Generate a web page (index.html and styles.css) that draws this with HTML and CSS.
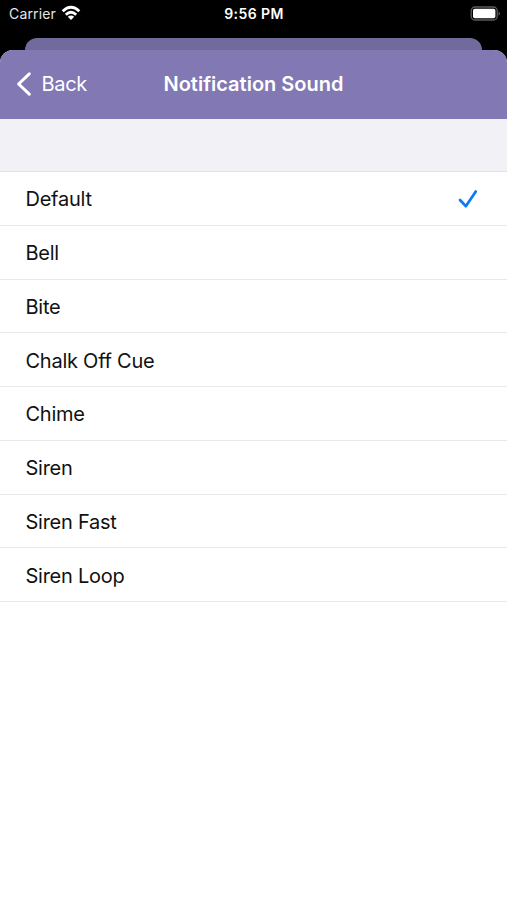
FILE: index.html
```
<!DOCTYPE html>
<html lang="en">
<head>
<meta charset="utf-8">
<title>Notification Sound</title>
<link rel="stylesheet" href="styles.css">
</head>
<body>
<header class="status">
  <div class="carrier"><span class="carrier-name">Carrier</span>
    <svg class="wifi" width="20" height="16" viewBox="0 0 20 16" fill="none" stroke="#fff" stroke-width="2.9"><path d="M1.7 6.2Q10 -1.5 18.3 6.2M4.8 9.7Q10 4.9 15.2 9.7"/><path d="M6.8 11.8Q10 9 13.2 11.8L10 15Z" fill="#fff" stroke="none"/></svg>
  </div>
  <time class="time">9:56 PM</time>
  <svg class="battery" width="31" height="16" viewBox="0 0 31 16"><rect x="1.2" y="1" width="26" height="13" rx="3.8" fill="none" stroke="#5c5c5c" stroke-width="1.3"/><rect x="3" y="2.8" width="22.4" height="9.4" rx="1.8" fill="#fff"/><path d="M28.6 5.2Q31.2 7.5 28.6 9.8Z" fill="#666"/></svg>
</header>
<div class="sheet-behind"></div>
<main class="sheet">
  <nav class="navbar">
    <a class="back"><svg class="chevron" width="16" height="26" viewBox="0 0 16 26" fill="none" stroke="#fff" stroke-width="3" stroke-linecap="round" stroke-linejoin="round"><path d="M13.3 2.8L2.6 13L13.3 23.2"/></svg><span class="back-label">Back</span></a>
    <h1 class="title">Notification Sound</h1>
  </nav>
  <div class="section-gap"></div>
  <ul class="sounds">
    <li class="row"><span>Default</span><svg class="check" width="22" height="22" viewBox="0 0 22 22" fill="none" stroke="#087af7" stroke-width="2.7" stroke-linecap="round" stroke-linejoin="round"><path d="M3 12L8.8 18.2L18.8 3.5"/></svg></li>
    <li class="row"><span>Bell</span></li>
    <li class="row"><span>Bite</span></li>
    <li class="row"><span>Chalk Off Cue</span></li>
    <li class="row"><span>Chime</span></li>
    <li class="row"><span>Siren</span></li>
    <li class="row"><span>Siren Fast</span></li>
    <li class="row"><span>Siren Loop</span></li>
  </ul>
</main>
</body>
</html>
```
FILE: styles.css
```
* { box-sizing: border-box; }
body {
  margin: 0;
  height: 900px;
  display: flex;
  flex-direction: column;
  overflow: hidden;
  background: #000;
  color: #111;
  font-family: Inter, "Liberation Sans", sans-serif;
}
.status {
  height: 38px;
  flex: none;
  padding: 0 6px 12px 9px;
  display: grid;
  grid-template-columns: 1fr auto 1fr;
  align-items: center;
  color: #fff;
}
.carrier { display: flex; align-items: center; gap: 5px; }
.carrier-name { font-size: 14px; letter-spacing: .15px; color: #e6e6e6; }
.wifi { margin-top: -1px; }
.time { font-size: 14px; font-weight: 600; letter-spacing: .4px; margin-right: 2px; }
.battery { justify-self: end; margin-top: 1px; }
.sheet-behind {
  flex: none;
  height: 12px;
  margin: 0 25px;
  border-radius: 12px 12px 0 0;
  background: #716a9c;
}
.sheet {
  flex: 1;
  overflow: hidden;
  border-radius: 13px 13px 0 0;
  background: #fff;
}
.navbar {
  height: 69px;
  padding: 0 16px 1px;
  display: grid;
  grid-template-columns: 1fr auto 1fr;
  align-items: center;
  background: #8178b4;
  color: #fff;
}
.back { display: flex; align-items: center; gap: 9.5px; }
.back-label { font-size: 20px; letter-spacing: -.3px; }
.title { margin: 0; font-size: 20px; font-weight: 600; letter-spacing: 0; }
.section-gap { height: 53px; background: #f1f1f6; border-bottom: 1px solid #e2e2e5; }
.sounds { margin: 0; padding: 0; list-style: none; }
.row {
  height: 53.75px;
  padding: 2px 28px 0 25.5px;
  display: flex;
  align-items: center;
  justify-content: space-between;
  border-bottom: 1px solid #e9e9eb;
  font-size: 20px;
  letter-spacing: -.25px;
}
```
